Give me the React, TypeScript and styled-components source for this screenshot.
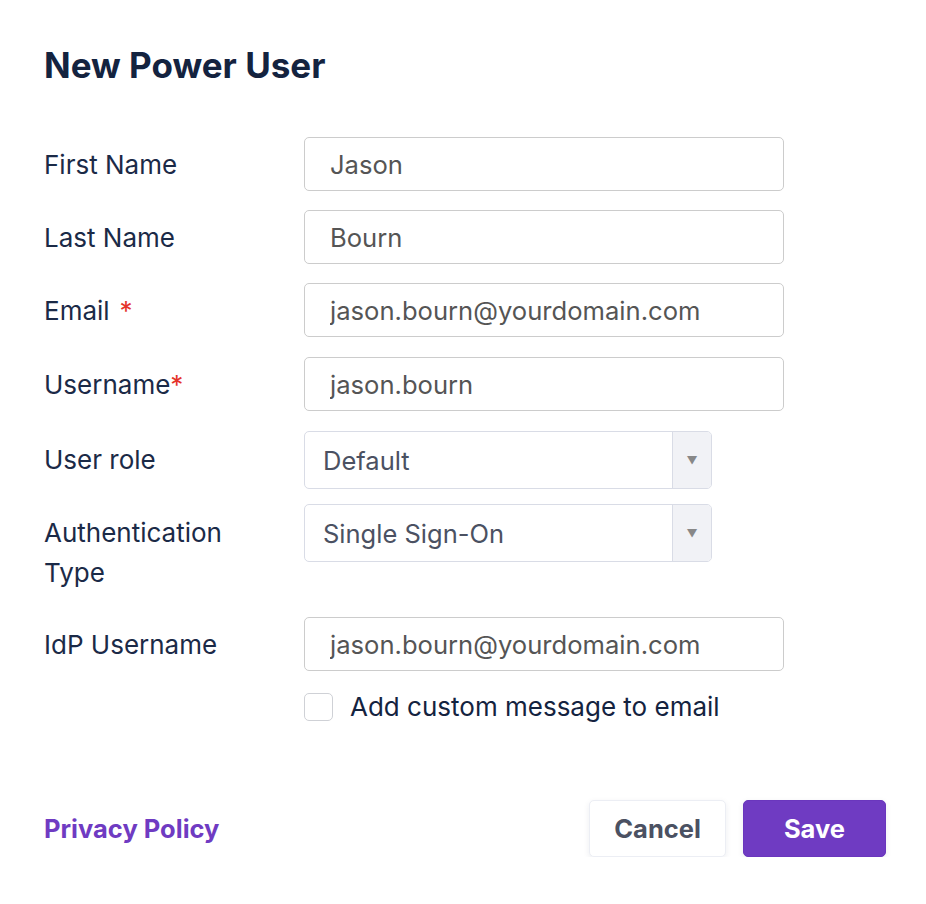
import styled, { createGlobalStyle } from "styled-components";

const GlobalStyle = createGlobalStyle`
  html, body {
    margin: 0;
    padding: 0;
    background: #ffffff;
  }
  body {
    font-family: Inter, "Noto Sans", "Liberation Sans", sans-serif;
    color: #1b2a47;
  }
  * { box-sizing: border-box; }
`;

const Page = styled.main`
  width: 926px;
  padding: 44px 40px 0 44px;
`;

const Title = styled.h1`
  margin: 0 0 51px;
  font-size: 35px;
  line-height: 42px;
  font-weight: 700;
  color: #14233f;
`;

const Form = styled.div`
  display: flex;
  flex-direction: column;
`;

const Row = styled.div<{ $space?: number }>`
  display: grid;
  grid-template-columns: 260px 480px;
  align-items: start;
  margin-top: ${(p) => p.$space ?? 0}px;
`;

const Label = styled.label<{ $offset: number }>`
  padding-top: ${(p) => p.$offset}px;
  font-size: 26px;
  line-height: 40px;
  color: #1b2a47;
`;

const Required = styled.span<{ $spaced?: boolean }>`
  color: #e5332a;
  margin-left: ${(p) => (p.$spaced ? "10px" : "0")};
`;

const TextInput = styled.input`
  width: 480px;
  height: 54px;
  padding: 0 25px;
  border: 1.5px solid #cccccc;
  border-radius: 5px;
  font-family: inherit;
  font-size: 25.6px;
  color: #555555;
  background: #ffffff;
  outline: none;
`;

const SelectBox = styled.div`
  width: 408px;
  height: 58px;
  display: flex;
  border: 1.5px solid #d9dce6;
  border-radius: 5px;
  overflow: hidden;
  background: #ffffff;
`;

const SelectValue = styled.div`
  flex: 1;
  display: flex;
  align-items: center;
  padding-left: 18px;
  font-size: 25.5px;
  color: #4b5162;
`;

const SelectArrow = styled.div`
  width: 39px;
  display: flex;
  align-items: center;
  justify-content: center;
  background: #f1f2f6;
  border-left: 1.5px solid #d9dce6;
  color: #888888;
  font-size: 11px;
`;

const CheckRow = styled.label`
  grid-column: 2;
  display: flex;
  align-items: center;
  gap: 17px;
  font-size: 26px;
  line-height: 32px;
  color: #14233f;
`;

const CheckBox = styled.span`
  width: 29px;
  height: 28px;
  border: 1.5px solid #cfd1d6;
  border-radius: 5px;
  background: #ffffff;
  flex-shrink: 0;
`;

const Footer = styled.footer`
  margin-top: 77px;
  display: flex;
  align-items: center;
  justify-content: space-between;
`;

const PolicyLink = styled.a`
  font-size: 25.5px;
  font-weight: 700;
  color: #6f3bc2;
  text-decoration: none;
`;

const Actions = styled.div`
  display: flex;
  gap: 17px;
`;

const Button = styled.button<{ $primary?: boolean }>`
  height: 57px;
  padding: 0 ${(p) => (p.$primary ? "40px" : "24px")};
  border-radius: 5px;
  font-family: inherit;
  font-size: 25.5px;
  font-weight: 700;
  cursor: pointer;
  border: 1.5px solid ${(p) => (p.$primary ? "#6a36bd" : "#eceef4")};
  background: ${(p) => (p.$primary ? "#6f3bc2" : "#ffffff")};
  color: ${(p) => (p.$primary ? "#ffffff" : "#4b5162")};
  box-shadow: 0 2px 6px rgba(30, 40, 80, 0.08);
`;

function Select({ value }: { value: string }) {
  return (
    <SelectBox>
      <SelectValue>{value}</SelectValue>
      <SelectArrow>▼</SelectArrow>
    </SelectBox>
  );
}

export default function App() {
  return (
    <>
      <GlobalStyle />
      <Page>
        <Title>New Power User</Title>
        <Form>
          <Row>
            <Label $offset={8}>First Name</Label>
            <TextInput defaultValue="Jason" />
          </Row>
          <Row $space={19}>
            <Label $offset={8}>Last Name</Label>
            <TextInput defaultValue="Bourn" />
          </Row>
          <Row $space={19}>
            <Label $offset={8}>
              Email<Required $spaced>*</Required>
            </Label>
            <TextInput defaultValue="jason.bourn@yourdomain.com" />
          </Row>
          <Row $space={20}>
            <Label $offset={8}>
              Username<Required>*</Required>
            </Label>
            <TextInput defaultValue="jason.bourn" />
          </Row>
          <Row $space={20}>
            <Label $offset={9}>User role</Label>
            <Select value="Default" />
          </Row>
          <Row $space={15}>
            <Label $offset={9}>
              Authentication
              <br />
              Type
            </Label>
            <Select value="Single Sign-On" />
          </Row>
          <Row $space={24}>
            <Label $offset={8}>IdP Username</Label>
            <TextInput defaultValue="jason.bourn@yourdomain.com" />
          </Row>
          <Row $space={20}>
            <CheckRow>
              <CheckBox />
              Add custom message to email
            </CheckRow>
          </Row>
        </Form>
        <Footer>
          <PolicyLink href="#">Privacy Policy</PolicyLink>
          <Actions>
            <Button>Cancel</Button>
            <Button $primary>Save</Button>
          </Actions>
        </Footer>
      </Page>
    </>
  );
}
